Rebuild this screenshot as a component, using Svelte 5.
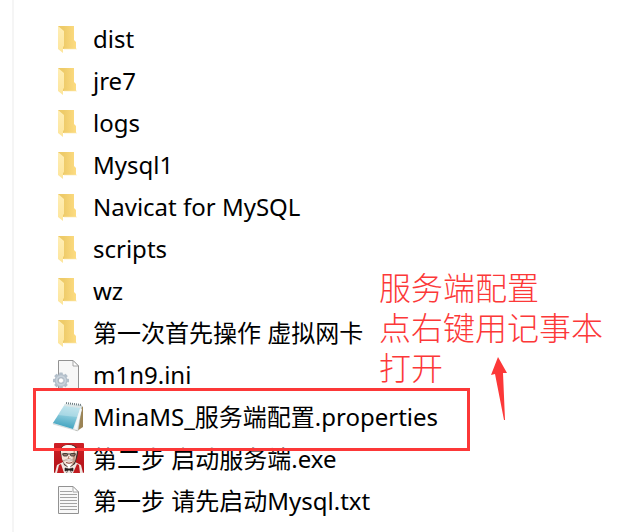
<script>
  const files = [
    { name: 'dist', icon: 'folder' },
    { name: 'jre7', icon: 'folder' },
    { name: 'logs', icon: 'folder' },
    { name: 'Mysql1', icon: 'folder' },
    { name: 'Navicat for MySQL', icon: 'folder' },
    { name: 'scripts', icon: 'folder' },
    { name: 'wz', icon: 'folder' },
    { name: '第一次首先操作 虚拟网卡', icon: 'folder' },
    { name: 'm1n9.ini', icon: 'ini' },
    { name: 'MinaMS_服务端配置.properties', icon: 'notepad', marked: true },
    { name: '第二步 启动服务端.exe', icon: 'exe' },
    { name: '第一步 请先启动Mysql.txt', icon: 'txt' },
  ];

  const noteLines = ['服务端配置', '点右键用记事本', '打开'];

  const teeth = [0, 45, 90, 135, 180, 225, 270, 315];
  const textLines = [6, 9, 12, 15, 18, 21, 24];
</script>

<svg width="0" height="0" class="defs" aria-hidden="true">
  <defs>
    <linearGradient id="folder-back" x1="0" y1="0" x2="1" y2="0">
      <stop offset="0.3" stop-color="#eecb69" />
      <stop offset="1" stop-color="#fddc82" />
    </linearGradient>
    <linearGradient id="folder-flap" x1="0" y1="0" x2="0" y2="1">
      <stop offset="0" stop-color="#ffeeb5" />
      <stop offset="1" stop-color="#fde59b" />
    </linearGradient>
    <linearGradient id="pad" x1="0.6" y1="0" x2="0.4" y2="1">
      <stop offset="0" stop-color="#b5dfe9" />
      <stop offset="0.45" stop-color="#8bcbdc" />
      <stop offset="1" stop-color="#3a9fbd" />
    </linearGradient>
    <linearGradient id="red" x1="0" y1="0" x2="0" y2="1">
      <stop offset="0" stop-color="#cf2026" />
      <stop offset="1" stop-color="#b01117" />
    </linearGradient>
  </defs>
</svg>

<main class="explorer">
  <ul class="files">
    {#each files as file}
      <li class="file" class:marked={file.marked}>
        <svg class="icon" viewBox="0 0 32 32" width="32" height="32" aria-hidden="true">
          {#if file.icon === 'folder'}
            <path d="M6 3H22V17L24 19V26H6Z" fill="url(#folder-back)" />
            <path d="M6 3L12 8V23L11 24V30L6 26Z" fill="url(#folder-flap)" />
            <path d="M12 26H25" stroke="#fbe7ad" stroke-width="0.6" />
          {:else if file.icon === 'ini'}
            <path d="M6.5 1.5H21L26.5 7V29.5H6.5Z" fill="#f7f7f7" stroke="#929292" />
            <path d="M21 1.5V7H26.5Z" fill="#fff" stroke="#929292" stroke-width="0.8" />
            <g transform="translate(9 21.5)">
              {#each teeth as angle}
                <rect x="-1.8" y="-8" width="3.6" height="4" rx="0.6" fill="#b3bfca" transform="rotate({angle})" />
              {/each}
              <circle r="4.6" fill="none" stroke="#b3bfca" stroke-width="3.6" />
              <circle r="4.4" fill="none" stroke="#c9d3dc" stroke-width="1.6" />
              <circle r="2.6" fill="#fff" stroke="#93a0ad" stroke-width="0.6" />
            </g>
          {:else if file.icon === 'notepad'}
            <path d="M28 4L31 6V26L25 30L21 28Z" fill="#9b8455" />
            <path d="M28 4L30 5L26 30L1 23L2 21Z" fill="#e8edef" stroke="#a9b3b5" stroke-width="0.4" />
            <path d="M13 3L29 5L21 28L1 22Z" fill="url(#pad)" />
            <path d="M13 3L29 5L26 16Q14 15 6 14Z" fill="#fff" opacity="0.25" />
            <path d="M13 3L29 5L28 7L12 5Z" fill="#dce5e6" />
            <path d="M14 2L29 4" stroke="#6c7c81" stroke-width="2" stroke-dasharray="1 1" />
            <path d="M23.500 28L29 8" stroke="#f6f9fa" stroke-width="2" />
          {:else if file.icon === 'exe'}
            <rect x="2" width="30" height="30" rx="1" fill="url(#red)" />
            <path d="M3 30L5 22L11 19H23L29 22L31 30Z" fill="#efe6e1" />
            <path d="M5 30L7 22L9 21L12 30ZM21 30L25 21L27 22L28 30Z" fill="#c01b20" />
            <path d="M9 13Q6 4 13 2Q22 0 25 5Q27 9 25 15L23 21L17 25L12 22Z" fill="#46312a" />
            <path d="M9 9Q9 2 16 2Q24 2 25 9L23 18Q21 22 17 24Q12 22 10 16Z" fill="#f7e4d8" />
            <path d="M9 10Q8 3 15 2Q23 1 25 8L22 6Q16 4 11 7Z" fill="#faf8f5" />
            <path d="M22 6Q25 12 22 20L20 21L21 12Z" fill="#c59a85" />
            <path d="M10 11H24" stroke="#302824" stroke-width="0.9" />
            <rect x="11" y="10.500" width="4.500" height="2.500" rx="1" fill="#96786a" stroke="#302824" stroke-width="0.8" />
            <rect x="18.500" y="10.500" width="4.500" height="2.500" rx="1" fill="#96786a" stroke="#302824" stroke-width="0.8" />
            <path d="M17 13L16 16H18.500" fill="none" stroke="#a36c56" stroke-width="0.8" />
            <path d="M11 18Q17 14 23 18Q18 17 17 18Q15 17 11 18Z" fill="#fff" stroke="#8b6c5e" stroke-width="0.4" />
            <path d="M14 19.500Q17 21 20 19.500" fill="none" stroke="#7a352d" stroke-width="0.9" />
            <path d="M15 21H19L18 25H16Z" fill="#fff" />
            <path d="M13 25L17 26L21 25V28L17 27L13 28ZM16 27L14.500 30M18 27L19.500 30" fill="#211b1a" stroke="#211b1a" stroke-width="0.6" />
          {:else}
            <path d="M6.5 1.5H21L26.5 7V28.5H6.5Z" fill="#f8f8f8" stroke="#929292" />
            {#each textLines as y}
              <path d="M8 {y + 0.5}H{y < 8 ? 20 : 25}" stroke="#a3a3a3" />
            {/each}
            <path d="M21 1.5V7H26.5Z" fill="#fff" stroke="#929292" stroke-width="0.8" />
          {/if}
        </svg>
        <span class="name">{file.name}</span>
      </li>
    {/each}
  </ul>

  <div class="note">
    {#each noteLines as line}
      <p>{line}</p>
    {/each}
    <svg class="arrow" viewBox="0 0 16 63" width="16" height="63" aria-hidden="true">
      <path d="M7 0L16 16H12L14 63H13L4 17L0 18Z" fill="#fc3838" />
    </svg>
  </div>
</main>

<style>
  :global(body) {
    margin: 0;
    background: #fff;
  }

  .defs {
    position: absolute;
  }

  .explorer {
    position: relative;
    margin-left: 12px;
    border-left: 2px solid #f5f5f5;
    min-height: 100vh;
    box-sizing: border-box;
    padding: 18px 0 10px 38px;
    color: #000;
    font-family: "Noto Sans", "Noto Sans CJK SC", sans-serif;
    font-size: 24px;
  }

  .files {
    list-style: none;
    margin: 0;
    padding: 0;
  }

  .file {
    position: relative;
    display: flex;
    align-items: center;
    gap: 9px;
    height: 42px;
    white-space: nowrap;
  }

  .icon {
    flex: none;
  }

  .name {
    line-height: 42px;
  }

  .marked::after {
    content: "";
    position: absolute;
    z-index: 1;
    top: -8px;
    left: -19px;
    width: 437px;
    height: 63px;
    box-sizing: border-box;
    border: 3px solid #fc3838;
  }

  .note {
    position: absolute;
    top: 269px;
    left: 365px;
    color: #fc3838;
    font-family: "Liberation Sans", "Noto Sans CJK SC", sans-serif;
    font-size: 32px;
    font-weight: 300;
    line-height: 40px;
    white-space: nowrap;
  }

  .note p {
    height: 40px;
    margin: 0;
  }

  .arrow {
    position: absolute;
    top: 88px;
    left: 112px;
  }
</style>
